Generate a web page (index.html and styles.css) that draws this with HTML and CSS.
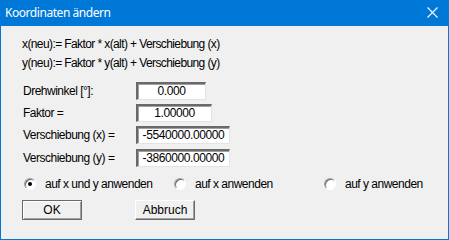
FILE: index.html
```html
<!DOCTYPE html>
<html lang="de">
<head>
    <meta charset="UTF-8">
    <title>Koordinaten ändern</title>
    <link rel="stylesheet" href="styles.css">
</head>
<body>
    <div class="dialog">
        <div class="title-bar">
            <span class="title">Koordinaten ändern</span>
            <svg class="close" width="11" height="11" viewBox="0 0 11 11">
                <path d="M0.5 0.5 L10.5 10.5 M10.5 0.5 L0.5 10.5" stroke="#fff" stroke-width="1.1" fill="none"/>
            </svg>
        </div>

        <div class="content">
            <p class="formula">x(neu):= Faktor * x(alt) + Verschiebung (x)</p>
            <p class="formula">y(neu):= Faktor * y(alt) + Verschiebung (y)</p>

            <div class="fields">
                <label>Drehwinkel [°]:</label>
                <div class="field w-angle">0.000</div>
                <label>Faktor =</label>
                <div class="field w-factor">1.00000</div>
                <label>Verschiebung (x) =</label>
                <div class="field w-shift">-5540000.00000</div>
                <label class="last">Verschiebung (y) =</label>
                <div class="field w-shift last">-3860000.00000</div>
            </div>

            <div class="options">
                <div class="option"><span class="radio checked"></span>auf x und y anwenden</div>
                <div class="option"><span class="radio"></span>auf x anwenden</div>
                <div class="option"><span class="radio"></span>auf y anwenden</div>
            </div>

            <div class="buttons">
                <button class="btn default">OK</button>
                <button class="btn">Abbruch</button>
            </div>
        </div>
    </div>
</body>
</html>
```

FILE: styles.css
```css
body {
    margin: 0;
    background: #ffffff;
    font-family: 'Liberation Sans', Arial, sans-serif;
}

.dialog {
    width: 449px;
    height: 240px;
    box-sizing: border-box;
    border: 1px solid #0078d7;
    border-top: none;
    background: #f0f0f0;
    display: flex;
    flex-direction: column;
}

.title-bar {
    height: 26px;
    background: #0078d7;
    display: flex;
    align-items: center;
    justify-content: space-between;
    padding: 0 10px 0 4px;
    color: #ffffff;
}

.title {
    font-family: 'Noto Sans', sans-serif;
    font-size: 12px;
    letter-spacing: -0.45px;
    position: relative;
    top: -1px;
}

.close {
    position: relative;
    top: -1px;
}

.content {
    padding: 9px 0 0 21px;
    font-size: 12px;
    color: #000000;
}

.formula {
    margin: 0;
    height: 19px;
    line-height: 19px;
    letter-spacing: -0.6px;
}

.fields {
    display: grid;
    grid-template-columns: 114px auto;
    row-gap: 4px;
    align-items: center;
    justify-items: start;
    margin-top: 9px;
}

.fields label {
    padding-left: 1px;
    letter-spacing: -0.5px;
}

.fields .last {
    margin-top: 1px;
}

.field {
    height: 18px;
    box-sizing: border-box;
    background: #ffffff;
    border-top: 2px solid #696969;
    border-left: 2px solid #696969;
    border-right: 1px solid #e3e3e3;
    border-bottom: 1px solid #e3e3e3;
    box-shadow: inset 1px 1px 0 #a0a0a0;
    text-align: center;
    line-height: 15px;
    letter-spacing: -0.4px;
    overflow: hidden;
    white-space: nowrap;
}

.w-angle {
    width: 70px;
}

.w-factor {
    width: 76px;
}

.w-shift {
    width: 94px;
}

.options {
    display: grid;
    grid-template-columns: 150px 150px auto;
    margin-top: 10px;
    padding-left: 2px;
}

.option {
    display: flex;
    align-items: center;
    gap: 9px;
    letter-spacing: -0.5px;
}

.radio {
    width: 12px;
    height: 12px;
    box-sizing: border-box;
    border-radius: 50%;
    border: 1px solid;
    border-color: #a0a0a0 #ffffff #ffffff #a0a0a0;
    background: #ffffff;
    box-shadow: inset 1px 1px 0 #696969;
    display: flex;
    align-items: center;
    justify-content: center;
}

.radio.checked::after {
    content: "";
    width: 4px;
    height: 4px;
    border-radius: 50%;
    background: #000000;
}

.buttons {
    display: flex;
    gap: 53px;
    margin-top: 9px;
}

.btn {
    width: 60px;
    height: 20px;
    box-sizing: border-box;
    padding: 0;
    font-family: 'Liberation Sans', Arial, sans-serif;
    font-size: 12px;
    color: #000000;
    background: #f0f0f0;
    border: 1px solid;
    border-color: #ffffff #696969 #696969 #ffffff;
    box-shadow: inset -1px -1px 0 #a0a0a0;
}

.btn.default {
    border: 1px solid #696969;
    box-shadow: inset 1px 1px 0 #ffffff, inset -1px -1px 0 #a0a0a0;
}
```
